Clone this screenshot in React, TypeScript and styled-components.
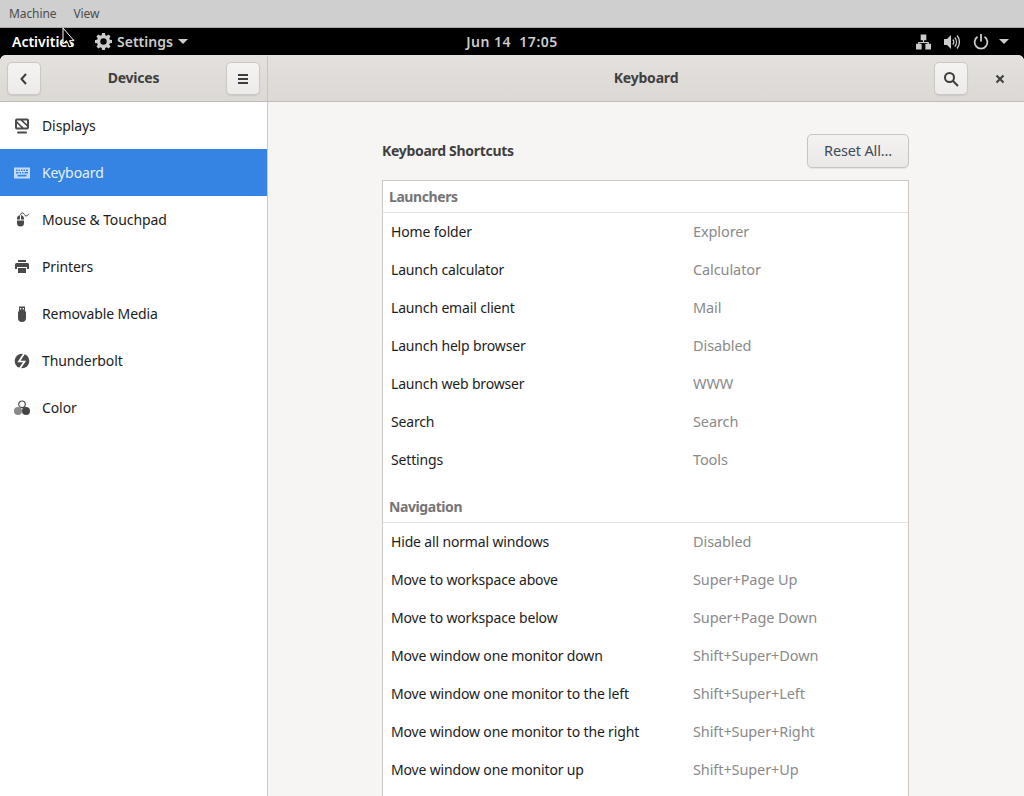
import React from "react";
import styled, { createGlobalStyle } from "styled-components";

const GlobalStyle = createGlobalStyle`
  html, body {
    margin: 0;
    padding: 0;
    height: 100%;
    overflow: hidden;
    background: #000;
  }
  * { box-sizing: border-box; }
`;

const Screen = styled.div`
  position: relative;
  width: 1024px;
  height: 796px;
  display: flex;
  flex-direction: column;
  overflow: hidden;
  font-family: "Noto Sans", "Open Sans", sans-serif;
`;

const MenuBar = styled.div`
  height: 28px;
  flex: none;
  display: flex;
  align-items: center;
  gap: 17px;
  padding: 0 9px 1px;
  background: #cfcfcf;
  border-bottom: 1px solid #a8a8a8;
  color: #4c4c4c;
  font-size: 12px;
  letter-spacing: -0.1px;
`;

const TopBar = styled.div`
  height: 27px;
  flex: none;
  display: grid;
  grid-template-columns: 1fr auto 1fr;
  align-items: center;
  background: #000;
  color: #ccc;
  font-size: 14px;
  font-weight: 600;
`;

const TopLeft = styled.div`
  display: flex;
  align-items: center;
  padding-left: 12px;
`;

const Activities = styled.span`
  color: #fff;
  width: 83px;
`;

const AppMenu = styled.div`
  display: flex;
  align-items: center;
  gap: 5px;
`;

const Clock = styled.div`
  letter-spacing: 0.5px;
`;

const TopRight = styled.div`
  display: flex;
  align-items: center;
  justify-content: flex-end;
  padding-right: 15px;
`;

const Tray = styled.span<{ $gap: number }>`
  display: flex;
  margin-right: ${p => p.$gap}px;
`;

const Caret = styled.span`
  width: 0;
  height: 0;
  border-left: 5px solid transparent;
  border-right: 5px solid transparent;
  border-top: 5px solid #ccc;
`;

const Window = styled.div`
  flex: 1;
  min-height: 0;
  display: flex;
  flex-direction: column;
  background: #f6f5f4;
  border-radius: 6px 6px 0 0;
  overflow: hidden;
`;

const HeaderBar = styled.div`
  height: 47px;
  flex: none;
  display: flex;
  padding-top: 1px;
  background: linear-gradient(#e4e1de, #dcd8d4);
  border-bottom: 1px solid #c0bbb5;
`;

const HeaderLeft = styled.div`
  width: 268px;
  flex: none;
  display: flex;
  align-items: center;
  justify-content: space-between;
  padding: 0 7px;
  border-right: 1px solid #c9c4be;
`;

const HeaderRight = styled.div`
  position: relative;
  flex: 1;
  display: flex;
  align-items: center;
  justify-content: flex-end;
  padding-right: 7px;
`;

const HeaderTitle = styled.div`
  padding-bottom: 3px;
  color: #3f3f3f;
  font-size: 14px;
  font-weight: 700;
  letter-spacing: -0.2px;
`;

const CenteredTitle = styled(HeaderTitle)`
  position: absolute;
  left: 134px;
  right: 134px;
  text-align: center;
`;

const IconButton = styled.div`
  width: 34px;
  height: 33px;
  display: flex;
  align-items: center;
  justify-content: center;
  background: linear-gradient(#f5f3f2, #edebe9);
  border: 1px solid #cdc8c3;
  border-radius: 5px;
  box-shadow: 0 1px 1px rgba(0, 0, 0, 0.08);
`;

const CloseButton = styled.div`
  width: 34px;
  height: 33px;
  margin-left: 15px;
  display: flex;
  align-items: center;
  justify-content: center;
`;

const Body = styled.div`
  flex: 1;
  min-height: 0;
  display: flex;
`;

const Sidebar = styled.div`
  width: 268px;
  flex: none;
  background: #fff;
  border-right: 1px solid #cdc7c2;
`;

const SideRow = styled.div<{ $active?: boolean }>`
  height: 47px;
  display: flex;
  align-items: center;
  gap: 12px;
  padding-left: 14px;
  background: ${p => (p.$active ? "#3584e4" : "transparent")};
  color: ${p => (p.$active ? "#e6f0fc" : "#1c1c1c")};
  font-size: 14px;
  letter-spacing: -0.1px;
`;

const SideIcon = styled.span`
  width: 16px;
  height: 16px;
  flex: none;
  display: flex;
`;

const Content = styled.div`
  flex: 1;
  min-width: 0;
  display: flex;
  flex-direction: column;
  padding: 32px 115px 0 114px;
`;

const SectionHead = styled.div`
  height: 34px;
  flex: none;
  display: flex;
  align-items: center;
  justify-content: space-between;
  margin-bottom: 12px;
`;

const SectionTitle = styled.div`
  padding-bottom: 2px;
  font-size: 14px;
  font-weight: 700;
  letter-spacing: -0.3px;
  color: #3f3f3f;
`;

const ResetButton = styled.div`
  width: 102px;
  height: 34px;
  padding-bottom: 2px;
  display: flex;
  align-items: center;
  justify-content: center;
  font-size: 14.5px;
  letter-spacing: -0.15px;
  color: #3f4a55;
  background: linear-gradient(#f3f2f0, #ebe9e7);
  border: 1px solid #c9c4be;
  border-radius: 5px;
  box-shadow: 0 1px 1px rgba(0, 0, 0, 0.07);
`;

const ListBox = styled.div`
  flex: 1;
  background: #fff;
  border: 1px solid #cdc7c2;
  border-bottom: 0;
`;

const GroupTitle = styled.div<{ $first?: boolean }>`
  height: ${p => (p.$first ? 32 : 44)}px;
  display: flex;
  align-items: flex-end;
  padding: 0 6px 6px;
  border-bottom: 1px solid #e3e1df;
  color: #757575;
  font-size: 14px;
  font-weight: 700;
  letter-spacing: -0.42px;
`;

const ShortcutRow = styled.div`
  height: 38px;
  display: grid;
  grid-template-columns: 302px 1fr;
  align-items: center;
  padding: 0 0 2px 8px;
`;

const ShortcutName = styled.span`
  color: #1c1c1c;
  font-size: 14px;
  letter-spacing: -0.16px;
`;

const ShortcutKeys = styled.span`
  color: #8a8a8a;
  font-size: 14.5px;
  letter-spacing: -0.1px;
`;

const Pointer = styled.svg`
  position: absolute;
  left: 62px;
  top: 27px;
`;

type Shortcut = [string, string];

const launchers: Shortcut[] = [
  ["Home folder", "Explorer"],
  ["Launch calculator", "Calculator"],
  ["Launch email client", "Mail"],
  ["Launch help browser", "Disabled"],
  ["Launch web browser", "WWW"],
  ["Search", "Search"],
  ["Settings", "Tools"],
];

const navigation: Shortcut[] = [
  ["Hide all normal windows", "Disabled"],
  ["Move to workspace above", "Super+Page Up"],
  ["Move to workspace below", "Super+Page Down"],
  ["Move window one monitor down", "Shift+Super+Down"],
  ["Move window one monitor to the left", "Shift+Super+Left"],
  ["Move window one monitor to the right", "Shift+Super+Right"],
  ["Move window one monitor up", "Shift+Super+Up"],
];

const GRAY = "#4a4a4a";

const DisplayIcon = () => (
  <svg width="16" height="16" viewBox="0 0 16 16" fill={GRAY}>
    <path fillRule="evenodd" d="M3 .5h10a2 2 0 0 1 2 2v7a2 2 0 0 1-2 2H3a2 2 0 0 1-2-2v-7a2 2 0 0 1 2-2zm0 2v.800L9.500 9.500H13V8.600L6.600 2.500zM3 5.500v4h4.200zm6-3L13 6.300V2.500z" />
    <rect x="3" y="13.500" width="10" height="2" rx="1" />
  </svg>
);

const KeyboardIcon = () => (
  <svg width="16" height="16" viewBox="0 0 16 16" fill="#c4daf7">
    <path fillRule="evenodd" d="M0 2.500h16v11H0zM2 4.500V6h1.500V4.500zm2.500 0V6H6V4.500zm2.500 0V6h1.500V4.500zm2.500 0V6H11V4.500zm2.500 0V6h2V4.500zM2 7V8.500h2.500V7zm3.500 0V8.500H7V7zM8 7V8.500h1.500V7zm2.500 0V8.500H14V7zM3.500 9.800v1.700h9V9.800z" />
  </svg>
);

const MouseIcon = () => (
  <svg width="16" height="16" viewBox="0 0 16 16" fill={GRAY}>
    <path d="M3 6A3.500 3.500 0 0 1 6 3.100V7.500H3zM7 3.100A3.500 3.500 0 0 1 10 6V7.500H7zM3 8.500h7V11a3.500 3.500 0 0 1-7 0z" />
    <path d="M6.500 3C6.500 1.500 7.500.5 9 1s1.500 3 3 3 2-1.200 3-2.500" fill="none" stroke={GRAY} strokeWidth="1" />
  </svg>
);

const PrinterIcon = () => (
  <svg width="16" height="16" viewBox="0 0 16 16" fill={GRAY}>
    <path d="M4 1h8v2H4zM2.500 4h11A1.500 1.500 0 0 1 15 5.500V10h-2V8H3v2H1V5.500A1.500 1.500 0 0 1 2.500 4zM4 9h8v5H4z" />
  </svg>
);

const UsbIcon = () => (
  <svg width="16" height="16" viewBox="0 0 16 16" fill={GRAY}>
    <path fillRule="evenodd" d="M5 .5h6V6H5zM6 2v1.500h1.200V2zm2.800 0v1.500H10V2z" />
    <path d="M4 5.500h8v6.500a4 4 0 0 1-8 0z" />
  </svg>
);

const ThunderboltIcon = () => (
  <svg width="16" height="16" viewBox="0 0 16 16">
    <circle cx="8" cy="8" r="7.300" fill={GRAY} />
    <path d="M10.500 0 5 8.500h5.500L5.500 16" fill="none" stroke="#fff" strokeWidth="1.700" />
  </svg>
);

const ColorIcon = () => (
  <svg width="16" height="16" viewBox="0 0 16 16">
    <circle cx="8" cy="4.300" r="3.300" fill="#fff" stroke={GRAY} strokeWidth="1.200" />
    <circle cx="4" cy="11" r="4" fill="#8a8a8a" />
    <circle cx="12" cy="11" r="4" fill="#444" />
  </svg>
);

const GearIcon = () => (
  <svg width="17" height="17" viewBox="0 0 16 16" fill="#ccc">
    <path fillRule="evenodd" d="M6.700 0h2.600l.4 2.100 1.300.6 1.800-1.200 1.800 1.800-1.200 1.800.6 1.300 2 .3v2.600l-2 .4-.6 1.300 1.200 1.800-1.800 1.800-1.800-1.200-1.300.6-.4 2H6.700l-.4-2-1.300-.6-1.800 1.200-1.800-1.800 1.200-1.800-.6-1.300-2-.4V6.700l2-.3.600-1.300-1.200-1.800 1.800-1.800L5 2.700l1.300-.6zM8 5a3 3 0 1 0 0 6 3 3 0 0 0 0-6z" />
  </svg>
);

const NetworkIcon = () => (
  <svg width="15" height="16" viewBox="0 0 16 16" fill="#ccc">
    <path d="M5 0h6v6H8.600v1.900h5.100v2h2.300v6h-6v-6h2.300V9H3.700v.9H6v6H0v-6h2.300v-2h5.100V6H5z" />
  </svg>
);

const VolumeIcon = () => (
  <svg width="16" height="16" viewBox="0 0 16 16" fill="none" stroke="#ccc">
    <path d="M0 5h3l4-4v14l-4-4H0z" fill="#ccc" stroke="none" />
    <path d="M8.800 5.500a4 4 0 0 1 0 5M10.800 3.500a7 7 0 0 1 0 9M13 1.500a10 10 0 0 1 0 13" strokeWidth="1.300" />
  </svg>
);

const PowerIcon = () => (
  <svg width="16" height="16" viewBox="0 0 16 16" fill="none" stroke="#ccc" strokeWidth="1.800">
    <path d="M8 0v7.500" />
    <path d="M4.500 2.800a6.400 6.400 0 1 0 7 0" />
  </svg>
);

const BackIcon = () => (
  <svg width="16" height="16" viewBox="0 0 16 16" fill="none" stroke="#3d3d3d" strokeWidth="2">
    <path d="M10 3 5.500 8l4.500 5" />
  </svg>
);

const MenuIcon = () => (
  <svg width="16" height="16" viewBox="0 0 16 16" fill="#3d3d3d">
    <path d="M3 3h10v2H3zM3 7h10v2H3zM3 11h10v2H3z" />
  </svg>
);

const SearchIcon = () => (
  <svg width="16" height="16" viewBox="0 0 16 16" fill="none" stroke="#3d3d3d" strokeWidth="2">
    <circle cx="6.500" cy="6.500" r="4.500" />
    <path d="m10 10 5 5" />
  </svg>
);

const CloseIcon = () => (
  <svg width="16" height="16" viewBox="0 0 16 16" fill="none" stroke="#3d3d3d" strokeWidth="2">
    <path d="m4.500 4.500 7 7M11.500 4.500l-7 7" />
  </svg>
);

const sideItems: [string, React.ReactNode][] = [
  ["Displays", <DisplayIcon />],
  ["Keyboard", <KeyboardIcon />],
  ["Mouse & Touchpad", <MouseIcon />],
  ["Printers", <PrinterIcon />],
  ["Removable Media", <UsbIcon />],
  ["Thunderbolt", <ThunderboltIcon />],
  ["Color", <ColorIcon />],
];

const Rows = ({ items }: { items: Shortcut[] }) => (
  <>
    {items.map(([name, keys]) => (
      <ShortcutRow key={name}>
        <ShortcutName>{name}</ShortcutName>
        <ShortcutKeys>{keys}</ShortcutKeys>
      </ShortcutRow>
    ))}
  </>
);

export default function App() {
  return (
    <Screen>
      <GlobalStyle />
      <MenuBar>
        <span>Machine</span>
        <span>View</span>
      </MenuBar>
      <TopBar>
        <TopLeft>
          <Activities>Activities</Activities>
          <AppMenu>
            <GearIcon />
            <span>Settings</span>
            <Caret />
          </AppMenu>
        </TopLeft>
        <Clock>Jun 14&nbsp; 17:05</Clock>
        <TopRight>
          <Tray $gap={13}><NetworkIcon /></Tray>
          <Tray $gap={13}><VolumeIcon /></Tray>
          <Tray $gap={10}><PowerIcon /></Tray>
          <Caret />
        </TopRight>
      </TopBar>
      <Window>
        <HeaderBar>
          <HeaderLeft>
            <IconButton><BackIcon /></IconButton>
            <HeaderTitle>Devices</HeaderTitle>
            <IconButton><MenuIcon /></IconButton>
          </HeaderLeft>
          <HeaderRight>
            <CenteredTitle>Keyboard</CenteredTitle>
            <IconButton><SearchIcon /></IconButton>
            <CloseButton><CloseIcon /></CloseButton>
          </HeaderRight>
        </HeaderBar>
        <Body>
          <Sidebar>
            {sideItems.map(([label, icon]) => (
              <SideRow key={label} $active={label === "Keyboard"}>
                <SideIcon>{icon}</SideIcon>
                <span>{label}</span>
              </SideRow>
            ))}
          </Sidebar>
          <Content>
            <SectionHead>
              <SectionTitle>Keyboard Shortcuts</SectionTitle>
              <ResetButton>Reset All...</ResetButton>
            </SectionHead>
            <ListBox>
              <GroupTitle $first>Launchers</GroupTitle>
              <Rows items={launchers} />
              <GroupTitle>Navigation</GroupTitle>
              <Rows items={navigation} />
            </ListBox>
          </Content>
        </Body>
      </Window>
      <Pointer width="14" height="22" viewBox="0 0 14 22">
        <path d="M1 1v16l3.500-3.300L7.500 20l2.500-1-2.500-5.300H12z" fill="#000" stroke="#fff" strokeWidth="1" />
      </Pointer>
    </Screen>
  );
}
